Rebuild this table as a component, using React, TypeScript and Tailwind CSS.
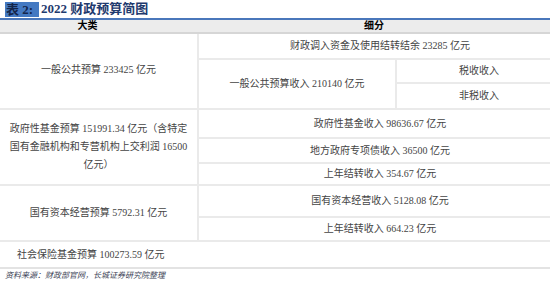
export default function App() {
  const serif = "font-['Liberation_Serif','Noto_Sans_CJK_SC',serif]";
  const base = "bg-white flex items-center justify-center text-[10px] text-[#444444]";
  const cell = `${base} leading-none`;

  return (
    <div className={`w-[550px] h-[283px] overflow-hidden bg-white ${serif}`}>
      <div className="w-[561px]">
        {/* title */}
        <div className="h-[18px] flex items-center pl-[5px] text-[13px] font-bold text-[#1f3a6e]">
          <span className="bg-[#4479c2] text-[#14254a] pl-[1px] pr-[6px] h-[15px] leading-[15px] mr-[2px]">表 2:</span>
          <span>2022 财政预算简图</span>
        </div>
        <div className="h-[2px] bg-[#4a77bb]" />

        {/* header */}
        <div className="flex h-[14px] bg-[#ececec] border-b-2 border-[#d6d6d6] text-[10px] font-bold text-black leading-none">
          <div className="w-[197px] pr-[22px] flex items-center justify-center">大类</div>
          <div className="flex-1 pr-[10px] flex items-center justify-center">细分</div>
        </div>

        {/* body */}
        <div className="grid grid-cols-[197px_196px_164px] grid-rows-[24px_22px_24px_27px_23px_20px_30px_22px_25px] gap-[2px] bg-[#eaeaea] border-b-2 border-[#e3e3e3]">
          <div className={`${cell} row-span-3 pb-[2px]`}>一般公共预算 233425 亿元</div>
          <div className={`${cell} col-span-2`}>财政调入资金及使用结转结余 23285 亿元</div>
          <div className={`${cell} row-span-2`}>一般公共预算收入 210140 亿元</div>
          <div className={cell}>税收收入</div>
          <div className={cell}>非税收入</div>

          <div className={`${base} row-span-3 flex-col leading-[18px] text-center`}>
            <span>政府性基金预算 151991.34 亿元（含特定</span>
            <span>国有金融机构和专营机构上交利润 16500</span>
            <span>亿元）</span>
          </div>
          <div className={`${cell} col-span-2`}>政府性基金收入 98636.67 亿元</div>
          <div className={`${cell} col-span-2`}>地方政府专项债收入 36500 亿元</div>
          <div className={`${cell} col-span-2`}>上年结转收入 354.67 亿元</div>

          <div className={`${cell} row-span-2`}>国有资本经营预算 5792.31 亿元</div>
          <div className={`${cell} col-span-2`}>国有资本经营收入 5128.08 亿元</div>
          <div className={`${cell} col-span-2`}>上年结转收入 664.23 亿元</div>

          <div className={`${cell} col-span-3 !justify-start pl-[17px]`}>社会保险基金预算 100273.59 亿元</div>
        </div>

        {/* source */}
        <div className="h-[14px] flex items-center pl-[5px] text-[8px] italic text-[#3b3f55]">
          资料来源：财政部官网，长城证券研究院整理
        </div>
      </div>
    </div>
  );
}
